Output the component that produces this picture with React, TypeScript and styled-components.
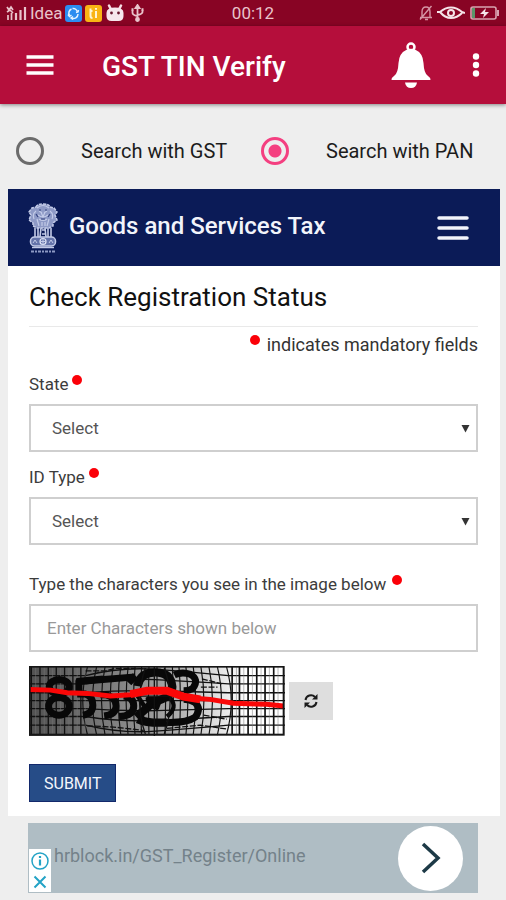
import React, { useState } from "react";
import styled, { createGlobalStyle } from "styled-components";

const GlobalStyle = createGlobalStyle`
  * { box-sizing: border-box; }
  body { margin: 0; background: #eeeeee; font-family: Roboto, "Liberation Sans", sans-serif; color: #1c1c1c; }
  button, input, select { font-family: inherit; }
`;

const Page = styled.div`
  display: flex;
  flex-direction: column;
  min-height: 100vh;
`;

const StatusBar = styled.div`
  display: grid;
  grid-template-columns: 1fr auto 1fr;
  align-items: center;
  height: 26px;
  padding: 0 6px;
  background: #880424;
  color: #e9c3cb;
  font-size: 17px;
`;

const StatusGroup = styled.div<{ $end?: boolean }>`
  display: flex;
  align-items: center;
  justify-content: ${(p) => (p.$end ? "flex-end" : "flex-start")};
  gap: ${(p) => (p.$end ? 4 : 3)}px;
  svg { display: block; flex: none; }
`;

const AppBar = styled.header`
  display: flex;
  align-items: center;
  height: 78px;
  padding: 0 16px 0 26px;
  background: #b50e3b;
  box-shadow: 0 1px 4px rgba(0, 0, 0, 0.45);
  color: #fff;
`;

const AppTitle = styled.h1`
  flex: 1;
  margin: 4px 0 0 48px;
  font-size: 28px;
  line-height: 36px;
  font-weight: 500;
  white-space: nowrap;
`;

const IconButton = styled.button`
  display: flex;
  padding: 0;
  border: 0;
  background: none;
  color: inherit;
  cursor: pointer;
  svg { display: block; }
`;

const BarActions = styled.div`
  display: flex;
  align-items: center;
  gap: 31px;
`;

const ModeRow = styled.div`
  display: grid;
  grid-template-columns: 1fr 1fr;
  align-items: center;
  height: 85px;
  padding: 8px 0 0 16px;
`;

const ModeOption = styled.label`
  display: flex;
  align-items: center;
  gap: 37px;
  font-size: 20px;
  line-height: 28px;
  white-space: nowrap;
  cursor: pointer;
`;

const Radio = styled.input`
  appearance: none;
  flex: none;
  width: 28px;
  height: 28px;
  margin: 0;
  border: 3px solid #6b6b6b;
  border-radius: 50%;
  &:checked {
    border-color: #f43f80;
    background: radial-gradient(circle, #f43f80 6px, transparent 7px);
  }
`;

const Portal = styled.main`
  margin: 0 6px 0 8px;
  background: #fff;
`;

const PortalHeader = styled.div`
  display: flex;
  align-items: center;
  height: 77px;
  padding: 0 31px 0 19px;
  background: #0b1b57;
  color: #f2f4fb;
`;

const PortalName = styled.div`
  flex: 1;
  margin: 0 0 4px 10px;
  font-size: 24px;
  line-height: 32px;
  font-weight: 500;
  white-space: nowrap;
`;

const Form = styled.form`
  display: flex;
  flex-direction: column;
  padding: 13px 22px 14px 21px;
`;

const Heading = styled.h2`
  margin: 0;
  padding-bottom: 11px;
  border-bottom: 1px solid #e9e9e9;
  font-size: 26px;
  line-height: 36px;
  font-weight: 400;
  color: #111;
`;

const Note = styled.p`
  display: flex;
  justify-content: flex-end;
  gap: 7px;
  margin: 5px 0 0;
  font-size: 18px;
  line-height: 26px;
  color: #333;
`;

const Dot = styled.span`
  width: 10px;
  height: 10px;
  margin-top: 3px;
  border-radius: 50%;
  background: #fb0008;
`;

const Field = styled.div<{ $top: number }>`
  display: flex;
  flex-direction: column;
  gap: 8px;
  margin-top: ${(p) => p.$top}px;
`;

const Label = styled.label<{ $wide?: boolean }>`
  display: flex;
  gap: ${(p) => (p.$wide ? 6 : 4)}px;
  font-size: 17px;
  line-height: 24px;
  color: #3c3c3c;
`;

const Select = styled.select`
  appearance: none;
  width: 100%;
  height: 48px;
  padding: 0 21px;
  border: 2px solid #cfcfcf;
  border-radius: 0;
  background: #fff;
  font-size: 17px;
  color: #555;
`;

const SelectWrap = styled.div`
  display: grid;
  align-items: center;
  > * { grid-area: 1 / 1; }
  svg { justify-self: end; margin-right: 8px; pointer-events: none; }
`;

const TextInput = styled.input`
  width: 100%;
  height: 48px;
  padding: 0 16px;
  border: 2px solid #cfcfcf;
  background: #fff;
  font-size: 17px;
  color: #333;
  &::placeholder { color: #999; opacity: 1; }
`;

const CaptchaRow = styled.div`
  display: flex;
  align-items: center;
  gap: 4px;
  margin-top: 14px;
  svg { display: block; }
`;

const RefreshButton = styled.button`
  display: flex;
  align-items: center;
  justify-content: center;
  width: 44px;
  height: 38px;
  padding: 0;
  border: 0;
  background: #dedede;
`;

const Submit = styled.button`
  align-self: flex-start;
  height: 38px;
  margin-top: 28px;
  padding: 0 14px;
  border: 1px solid #12286b;
  background: #264c87;
  font-size: 16px;
  font-weight: 400;
  color: #f4f7fc;
`;

const Ad = styled.aside`
  display: flex;
  align-items: center;
  justify-content: space-between;
  height: 70px;
  margin: 7px 28px;
  padding-right: 15px;
  background: #afbdc4;
`;

const AdInfo = styled.div`
  display: flex;
  align-self: flex-end;
  flex-direction: column;
  align-items: center;
  justify-content: space-around;
  width: 22px;
  height: 43px;
  margin: 0 3px 1px 1px;
  background: #fff;
  color: #23a3c6;
`;

const AdLink = styled.a`
  flex: 1;
  margin-bottom: 4px;
  font-size: 18px;
  line-height: 24px;
  color: #74828a;
  text-decoration: none;
`;

const AdGo = styled.button`
  display: flex;
  align-items: center;
  justify-content: center;
  width: 65px;
  height: 65px;
  padding: 0;
  border: 0;
  border-radius: 50%;
  background: #fff;
`;

const Signal = () => (
  <svg width="21" height="16" viewBox="0 0 21 16" fill="none" stroke="#e9c3cb">
    <path d="M1 2l2 3 2-3 2 3M1 7l3-2 3 3M2 15v-5M5.500 15V8" strokeWidth="1.700" />
    <path d="M10 15V8M14.500 15V5M19 15V2" strokeWidth="2.200" />
  </svg>
);

const SyncBadge = () => (
  <svg width="17" height="17" viewBox="0 0 17 17">
    <rect width="17" height="17" rx="3" fill="#2c8df0" />
    <g fill="none" stroke="#e6f3ff" strokeWidth="1.500">
      <path d="M4.500 10.500a4.500 4.500 0 0 1 2-6.500M7.500 3.500a4.500 4.500 0 0 1 5 3.500M13 9a4.500 4.500 0 0 1-6.500 4" />
      <path d="M3 9.500l1.500 2 2-1.500M11 7.500l2-.5.500-2M8 11.500l-2 1.500 2 1.500" />
    </g>
  </svg>
);

const YellowBadge = () => (
  <svg width="17" height="17" viewBox="0 0 17 17">
    <rect width="17" height="17" rx="3" fill="#f9b414" />
    <path d="M5.500 3.500v7.500q0 2 2 2M5.500 6h2M11 6v7M11 3v1.800" fill="none" stroke="#fff4d4" strokeWidth="2" />
  </svg>
);

const DroidIcon = () => (
  <svg width="20" height="18" viewBox="0 0 20 18">
    <path d="M4 1.500l2 4M16 1.500l-2 4" stroke="#f6dfe5" strokeWidth="2.500" strokeLinecap="round" />
    <path d="M1.500 9q0-5.500 8.500-5.500T18.500 9v3q0 5-5 5H6.500q-5 0-5-5z" fill="#f6e6ec" />
    <circle cx="6.500" cy="9" r="1.400" fill="#65122a" />
    <circle cx="13.500" cy="9" r="1.400" fill="#65122a" />
  </svg>
);

const UsbIcon = () => (
  <svg width="19" height="18" viewBox="-2 0 19 18" fill="none" stroke="#e9c3cb" strokeWidth="1.800">
    <path d="M7.500 2v13M2.500 6v3q0 2 5 3M12.500 6v2q0 2-5 3" />
    <path d="M5.500 4l2-3 2 3z" fill="#e9c3cb" />
    <circle cx="7.500" cy="15.500" r="1.500" fill="#e9c3cb" />
    <path d="M1.500 5.500h2M11.500 5.500h2" strokeWidth="2.500" />
  </svg>
);

const MutedBell = () => (
  <svg width="14" height="16" viewBox="0 0 14 16" fill="none" stroke="#d595a4" strokeWidth="1.400">
    <path d="M1 12.500h12M3 12V7q0-5 4-5t4 5v5M6 14.500h3M1 14.500L12.500 1" />
  </svg>
);

const EyeIcon = () => (
  <svg width="28" height="14" viewBox="0 0 28 14" fill="none" stroke="#f5e4e8">
    <path d="M0 6h3q5-4.500 11-4.500T25 6l3 1M3 6q5 6 11 6t11-5" strokeWidth="2" />
    <circle cx="14" cy="7" r="3" strokeWidth="2" />
  </svg>
);

const BatteryIcon = () => (
  <svg width="31" height="16" viewBox="0 0 31 16">
    <rect x="2" y="2" width="25" height="12" rx="2" fill="none" stroke="#d8a3af" strokeWidth="1.600" />
    <path d="M3 3h3v10H3z" fill="#5a9669" />
    <path d="M29 5v6" stroke="#d8a3af" strokeWidth="2" />
    <path d="M17 3l-6 6h4l-1 4 6-6h-4z" fill="#f5e4e8" />
  </svg>
);

const BellIcon = () => (
  <svg width="40" height="46" viewBox="0 0 40 46">
    <circle cx="20" cy="5" r="3.500" fill="none" stroke="#fff" strokeWidth="2.500" />
    <path d="M16 7.500Q20 6 24 7.500Q32 11 32.500 21Q33 31 36.500 33.500Q39.500 35.500 39.500 38H.5Q.5 35.500 3.500 33.500Q7 31 7.500 21Q8 11 16 7.500Z" fill="#fff" />
    <path d="M14 40.500h12q-1 5.500-6 5.500t-6-5.500z" fill="#fff" />
  </svg>
);

const Emblem = () => (
  <svg width="32" height="50" viewBox="0 0 32 50" fill="none" stroke="#c3cbe8">
    <path d="M9 4q1-3 7-3t7 3l4 1 3 4-2 3 2 5-4 3 0 3-4 2H10l-4-2v-3l-4-3 2-5-2-3 3-4z" fill="#8e9ac6" strokeWidth="1.500" strokeDasharray="3 1" />
    <path d="M10 5q6-5 12 0M9 8q-4 3-2 8M23 8q4 3 2 8M12 8l3 2M20 8l-3 2M11 12q5 4 10 0M14 9l2 5 2-5M12 16q4 3 8 0M10 16l2 7M22 16l-2 7M15 19v4M18 19v4" strokeWidth="1.200" />
    <path d="M12 7h2M18 7h2M9 11l2 3M23 11l-2 3M14 16h4" stroke="#33427f" strokeWidth="1.200" />
    <path d="M8 25v9M11 25v10M14 25l-1 9M18 25l1 9M21 25v10M24 25v9M15 27h3M15 31h3" strokeWidth="1.600" />
    <rect x="3.500" y="34" width="25" height="9" rx="4" fill="#6574aa" strokeWidth="1.500" />
    <circle cx="16" cy="38.500" r="3" stroke="#e1e6f6" strokeWidth="1.200" />
    <path d="M16 35.500v6M13 38.500h6M6 40l2-3 2 3M22 40l2-3 2 3" strokeWidth="1" />
    <path d="M5 44.500h22" strokeWidth="1.500" />
    <path d="M4 48.500h24" stroke="#8d99c4" strokeWidth="1.800" strokeDasharray="3 1 2 1" />
  </svg>
);

const leftLines = [32, 58, 83, 107, 132, 157, 181];
const rightLines = [636, 658, 684, 710, 735, 761];
const rowLines = [60, 85, 112, 136, 160, 184, 210];
const warpLines = [-190, -165, -142, -120, -99, -79, -60, -42, -22, 0, 22, 42, 60, 79, 99, 120, 142, 165, 190];

const Captcha = () => (
  <svg width="256" height="70" viewBox="25 31 770 212" preserveAspectRatio="none" role="img" aria-label="Captcha">
    <defs>
      <linearGradient id="shade">
        <stop offset="0" stopColor="#505050" />
        <stop offset="0.250" stopColor="#727272" />
        <stop offset="0.550" stopColor="#a5a5a5" />
        <stop offset="0.720" stopColor="#dcdcdc" />
        <stop offset="0.850" stopColor="#fff" />
      </linearGradient>
    </defs>
    <rect x="25" y="31" width="770" height="212" fill="url(#shade)" />
    <g stroke="#111" strokeWidth="4" fill="none">
      {leftLines.map((x) => <path key={x} d={`M${x} 33V240`} />)}
      {rightLines.map((x) => <path key={x} d={`M${x} 33V240`} strokeWidth="5" />)}
      {rowLines.map((y) => (
        <path key={y} d={`M25 ${y}H195Q300 ${y + (y - 136) * 0.35} 405 ${y + (y - 136) * 0.25}T625 ${y}H795`} />
      ))}
      {warpLines.map((d) => (
        <path key={d} d={`M${410 + d * 1.1} 33Q${410 + d * 1.25} 136 ${410 + d * 1.1} 240`} strokeWidth="3.500" />
      ))}
    </g>
    <g stroke="#777" strokeWidth="3" opacity="0.500">
      {rightLines.map((x) => <path key={x} d={`M${x + 13} 35V237`} />)}
      {leftLines.map((x) => <path key={x} d={`M${x + 13} 35V237`} />)}
    </g>
    <g stroke="#080808" strokeWidth="21" fill="none" strokeLinejoin="round">
      <ellipse cx="116" cy="94" rx="30" ry="22" />
      <ellipse cx="115" cy="153" rx="31" ry="27" />
      <path d="M175 112V78L345 64M168 78l80-8M170 116h25q22 6 22 34 0 26-30 30" />
      <path d="M240 118h15q32 8 32 34 0 26-36 30M310 122q30 4 30 30 0 30-44 32M345 60l-20 22" />
      <path d="M352 92Q358 50 405 50Q452 50 456 94Q456 126 400 140L348 186M352 192Q380 205 440 202" strokeWidth="25" />
      <path d="M462 58Q485 47 510 56Q538 72 518 98Q508 106 490 106M440 202Q500 204 525 186Q544 160 525 142Q510 132 490 132" />
      <path d="M382 130h38l-10 28-22-8zM352 122l22 34M450 128q24 28-10 56M368 190l-15-26" strokeWidth="13" />
    </g>
    <g stroke="#111" strokeWidth="4" fill="none">
      <path d="M195 46h60l30-8h60M200 212l80 4 90 10M440 220l100-10 80 12M545 70l60 15M542 95h50M550 180l70 12" strokeDasharray="18 5" />
      <path d="M402 33v210M350 122h115M375 37q-35 100 0 200M432 37q35 100 0 200" />
    </g>
    <path d="M25 102L90 104 140 112 200 114 270 122 330 118 375 108H455L500 127 570 132 640 144 740 147 790 152" stroke="#fa0707" strokeWidth="15" fill="none" />
    <path d="M330 116L380 106 440 106 490 124 540 132" stroke="#fa0707" strokeWidth="24" fill="none" />
    <rect x="27" y="33" width="764" height="206" fill="none" stroke="#161616" strokeWidth="6" />
  </svg>
);

const Arrow = () => (
  <svg width="9" height="9" viewBox="0 0 9 9"><path d="M.5 1h8l-4 7.500z" fill="#333" /></svg>
);

export default function App() {
  const [mode, setMode] = useState("pan");
  return (
    <Page>
      <GlobalStyle />
      <StatusBar>
        <StatusGroup>
          <Signal />
          <span>Idea</span>
          <SyncBadge />
          <YellowBadge />
          <DroidIcon />
          <UsbIcon />
        </StatusGroup>
        <span>00:12</span>
        <StatusGroup $end>
          <MutedBell />
          <EyeIcon />
          <BatteryIcon />
        </StatusGroup>
      </StatusBar>

      <AppBar>
        <IconButton aria-label="Open menu">
          <svg width="28" height="22" viewBox="0 0 28 22" stroke="#fff" strokeWidth="3.500">
            <path d="M0.500 3h27M0.500 11h27M0.500 19h27" />
          </svg>
        </IconButton>
        <AppTitle>GST TIN Verify</AppTitle>
        <BarActions>
          <IconButton aria-label="Notifications"><BellIcon /></IconButton>
          <IconButton aria-label="More options">
            <svg width="28" height="26" viewBox="0 0 28 26" fill="#fff">
              <circle cx="14" cy="4.500" r="3.200" />
              <circle cx="14" cy="13" r="3.200" />
              <circle cx="14" cy="21.500" r="3.200" />
            </svg>
          </IconButton>
        </BarActions>
      </AppBar>

      <ModeRow role="radiogroup" aria-label="Search mode">
        <ModeOption>
          <Radio type="radio" name="mode" checked={mode === "gst"} onChange={() => setMode("gst")} />
          Search with GST
        </ModeOption>
        <ModeOption>
          <Radio type="radio" name="mode" checked={mode === "pan"} onChange={() => setMode("pan")} />
          Search with PAN
        </ModeOption>
      </ModeRow>

      <Portal>
        <PortalHeader>
          <Emblem />
          <PortalName>Goods and Services Tax</PortalName>
          <IconButton aria-label="Site menu">
            <svg width="32" height="26" viewBox="0 0 32 26" stroke="#f2f4fb" strokeWidth="3.500" strokeLinecap="round">
              <path d="M2 3h28M2 13h28M2 23h28" />
            </svg>
          </IconButton>
        </PortalHeader>
        <Form onSubmit={(e) => e.preventDefault()}>
          <Heading>Check Registration Status</Heading>
          <Note><Dot />indicates mandatory fields</Note>
          <Field $top={14}>
            <Label htmlFor="state">State<Dot /></Label>
            <SelectWrap>
              <Select id="state"><option>Select</option></Select>
              <Arrow />
            </SelectWrap>
          </Field>
          <Field $top={13}>
            <Label htmlFor="idtype">ID Type<Dot /></Label>
            <SelectWrap>
              <Select id="idtype"><option>Select</option></Select>
              <Arrow />
            </SelectWrap>
          </Field>
          <Field $top={27}>
            <Label htmlFor="captcha" $wide>Type the characters you see in the image below<Dot /></Label>
            <TextInput id="captcha" placeholder="Enter Characters shown below" />
          </Field>
          <CaptchaRow>
            <Captcha />
            <RefreshButton type="button" aria-label="Refresh image">
              <svg width="16" height="16" viewBox="0 0 16 16" fill="none" stroke="#1c1c1c" strokeWidth="2">
                <path d="M2.500 7a5.500 5.500 0 0 1 9.500-3M13.500 9A5.500 5.500 0 0 1 4 12" />
                <path d="M14.500 1v5.500H9zM1.500 15V9.500H7z" fill="#1c1c1c" stroke="none" />
              </svg>
            </RefreshButton>
          </CaptchaRow>
          <Submit type="submit">SUBMIT</Submit>
        </Form>
      </Portal>

      <Ad>
        <AdInfo>
          <svg width="18" height="18" viewBox="0 0 18 18" fill="none" stroke="currentColor" strokeWidth="1.500">
            <circle cx="9" cy="9" r="8" />
            <path d="M9 7.500v6M9 4v2" strokeWidth="2.200" />
          </svg>
          <svg width="14" height="14" viewBox="0 0 14 14" stroke="currentColor" strokeWidth="2">
            <path d="M1.500 1.500l11 11M12.500 1.500l-11 11" />
          </svg>
        </AdInfo>
        <AdLink href="#">hrblock.in/GST_Register/Online</AdLink>
        <AdGo aria-label="Open link">
          <svg width="20" height="32" viewBox="0 0 20 32" fill="none" stroke="#1d3a47" strokeWidth="3.500">
            <path d="M2 2l15 14L2 30" />
          </svg>
        </AdGo>
      </Ad>
    </Page>
  );
}
